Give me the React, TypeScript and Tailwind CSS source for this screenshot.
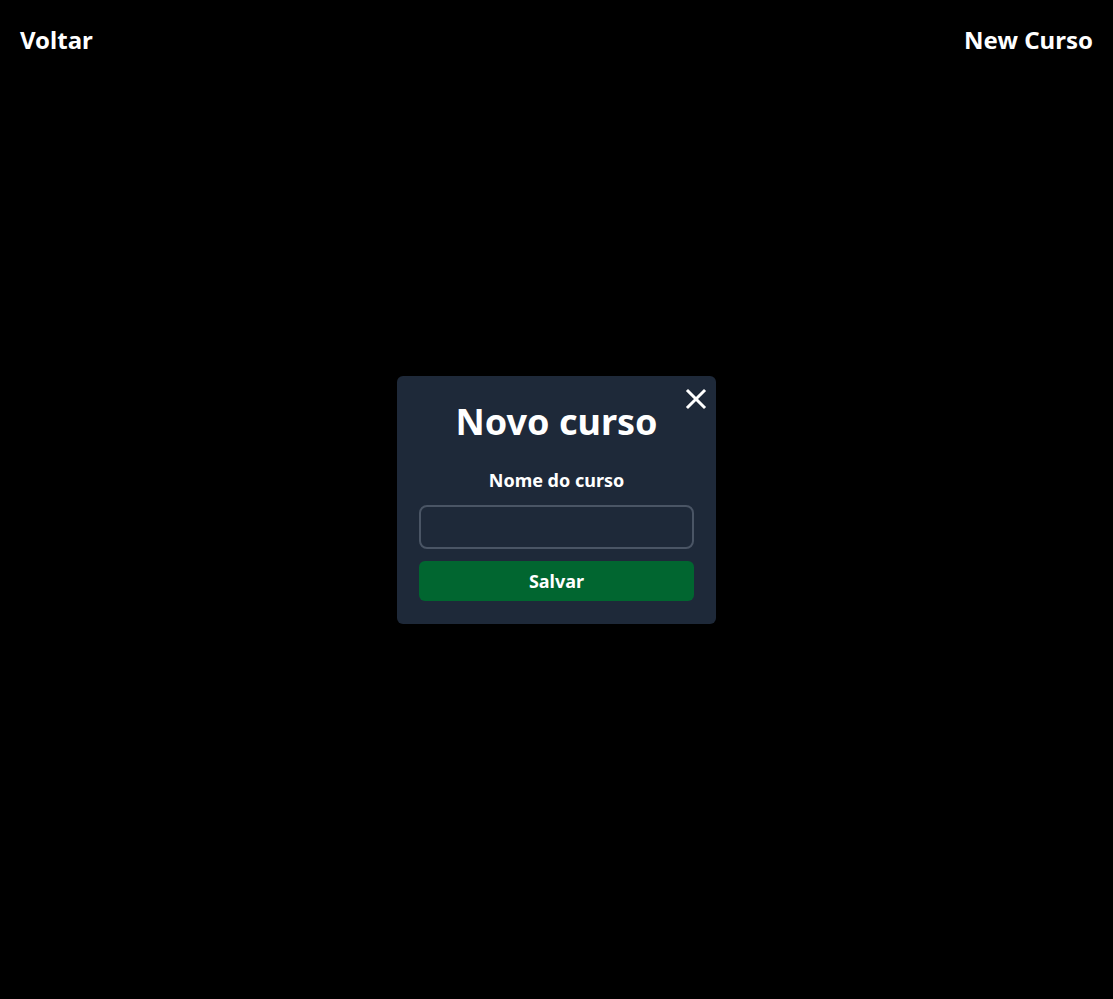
import React from 'react';

const font = { fontFamily: '"Noto Sans", "Open Sans", sans-serif' };

export default function App() {
  return (
    <div className="min-h-screen bg-black text-white" style={font}>
      {/* Header */}
      <header className="flex items-center justify-between px-5 pt-6">
        <button className="text-2xl font-bold">Voltar</button>
        <button className="text-2xl font-bold">New Curso</button>
      </header>

      {/* Modal */}
      <div className="fixed inset-0 flex items-center justify-center">
        <div className="relative w-[319px] rounded-md bg-gray-800 px-[22px] pt-5 pb-[23px]">
          <button className="absolute right-[8px] top-[11px] text-white" aria-label="Fechar">
            <svg width="24" height="24" viewBox="0 0 24 24" fill="none" stroke="currentColor" strokeWidth="3" strokeLinecap="square">
              <path d="M4 4 L20 20 M20 4 L4 20" />
            </svg>
          </button>
          <h2 className="text-center text-4xl font-bold leading-[52px]">Novo curso</h2>
          <label className="mt-[18px] block text-center text-lg font-bold">Nome do curso</label>
          <input className="mt-[11px] block h-[44px] w-full rounded-lg border-2 border-gray-600 bg-gray-800 px-3 text-white outline-none" />
          <button className="mt-3 h-[40px] w-full rounded-md bg-green-800 text-lg font-bold">Salvar</button>
        </div>
      </div>
    </div>
  );
}
